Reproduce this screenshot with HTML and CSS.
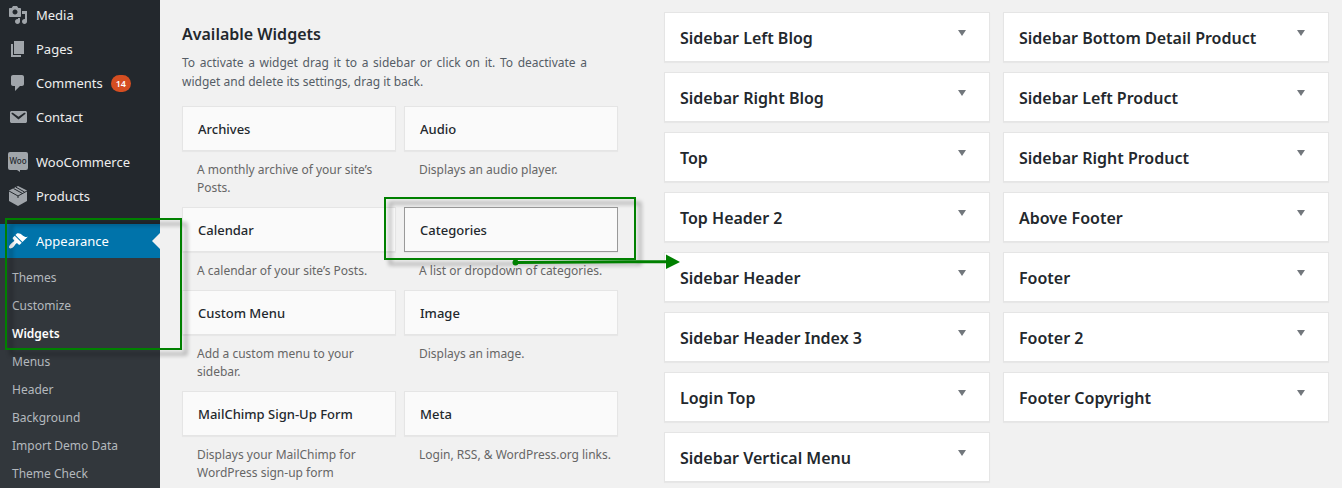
FILE: index.html
```html
<!DOCTYPE html>
<html lang="en">
<head>
<meta charset="utf-8">
<title>Widgets</title>
<link rel="stylesheet" href="styles.css">
</head>
<body>
<div class="page">
  <nav class="menu" aria-label="Main menu">
    <ul class="menu-list">
      <li><a class="menu-link" href="#"><svg class="icon" viewBox="0 0 20 20"><path d="M13 11V4c0-.55-.45-1-1-1h-1.67L9 1H5L3.67 3H2c-.55 0-1 .45-1 1v7c0 .55.45 1 1 1h10c.55 0 1-.45 1-1zM7 4.5c1.38 0 2.5 1.12 2.5 2.5S8.38 9.5 7 9.5 4.5 8.38 4.5 7 5.62 4.5 7 4.5zM14 6h5v10.5c0 1.38-1.12 2.5-2.5 2.5S14 17.88 14 16.5s1.12-2.5 2.5-2.5c.17 0 .34.02.5.05V9h-3V6zm-4 8.05V13h2v3.5c0 1.38-1.12 2.5-2.5 2.5S7 17.88 7 16.5 8.12 14 9.5 14c.17 0 .34.02.5.05z"/></svg>Media</a></li>
      <li><a class="menu-link" href="#"><svg class="icon" viewBox="0 0 20 20"><path d="M6 15V2h10v13H6zm-1 1h8v2H3V5h2v11z"/></svg>Pages</a></li>
      <li><a class="menu-link" href="#"><svg class="icon" viewBox="0 0 20 20"><path d="M5 2h9c1.1 0 2 .9 2 2v7c0 1.1-.9 2-2 2h-2l-5 5v-5H5c-1.1 0-2-.9-2-2V4c0-1.1.9-2 2-2z"/></svg>Comments <span class="badge">14</span></a></li>
      <li><a class="menu-link" href="#"><svg class="icon" viewBox="0 0 20 20"><path d="M3.87 4h13.25C18.37 4 19 4.59 19 5.79v8.42c0 1.19-.63 1.79-1.88 1.79H3.87c-1.25 0-1.88-.6-1.88-1.79V5.79c0-1.2.63-1.79 1.88-1.79zm6.62 8.6l6.74-5.53c.24-.2.43-.66.13-1.07-.29-.41-.82-.42-1.17-.17l-5.7 3.86L4.8 5.83c-.35-.25-.88-.24-1.17.17-.3.41-.11.87.13 1.07z"/></svg>Contact</a></li>
      <li class="group-start"><a class="menu-link" href="#"><svg class="icon" viewBox="0 0 20 20"><path d="M2 0h16q2 0 2 2v14q0 2-2 2h-6v2l-3-2H2q-2 0-2-2V2q0-2 2-2z"/><text class="icon-text" x="10" y="12" text-anchor="middle">Woo</text></svg>WooCommerce</a></li>
      <li><a class="menu-link" href="#"><svg class="icon" viewBox="0 0 20 20"><path d="M10 0l9 4.500v10.500l-9 5-9-5V4.500z"/><path class="icon-line" d="M1 5l9 5 9-5M10 10v2M5.500 2.500l9 5M8 1.200l8.500 4.800"/></svg>Products</a></li>
      <li class="group-start"><a class="menu-link current" href="#" aria-current="true"><svg class="icon" viewBox="0 0 20 20"><path d="M14.480 11.060L7.410 3.990l1.500-1.500c.5-.56 2.300-.47 3.510.32 1.210.8 1.430 1.280 2.910 2.100 1.180.64 2.450 1.260 4.450.85zm-.71.71L6.700 4.700 4.930 6.470c-.39.39-.39 1.020 0 1.410l1.060 1.060c.39.39.39 1.030 0 1.420-.6.6-1.430 1.110-2.210 1.690-.35.26-.7.53-1.010.84C1.430 14.230.4 16.080 1.400 17.070c.99 1 2.840-.03 4.180-1.360.31-.31.58-.66.85-1.020.57-.78 1.080-1.610 1.690-2.210.39-.39 1.020-.39 1.410 0l1.060 1.060c.39.39 1.020.39 1.410 0z"/></svg>Appearance</a></li>
    </ul>
    <ul class="submenu">
      <li><a class="submenu-link" href="#">Themes</a></li>
      <li><a class="submenu-link" href="#">Customize</a></li>
      <li><a class="submenu-link active" href="#" aria-current="page">Widgets</a></li>
      <li><a class="submenu-link" href="#">Menus</a></li>
      <li><a class="submenu-link" href="#">Header</a></li>
      <li><a class="submenu-link" href="#">Background</a></li>
      <li><a class="submenu-link" href="#">Import Demo Data</a></li>
      <li><a class="submenu-link" href="#">Theme Check</a></li>
    </ul>
    <div class="marker menu-marker"></div>
  </nav>
  <main class="content">
    <section class="available">
      <h1 class="title">Available Widgets</h1>
      <p class="intro">To activate a widget drag it to a sidebar or click on it. To deactivate a widget and delete its settings, drag it back.</p>
      <div class="widgets">
        <article><h2 class="widget">Archives</h2><p class="about">A monthly archive of your site’s Posts.</p></article>
        <article><h2 class="widget">Audio</h2><p class="about">Displays an audio player.</p></article>
        <article><h2 class="widget">Calendar</h2><p class="about">A calendar of your site’s Posts.</p></article>
        <article class="marked"><h2 class="widget selected">Categories</h2><p class="about">A list or dropdown of categories.</p>
          <div class="marker widget-marker"></div>
          <svg class="arrow" width="168" height="16" viewBox="0 0 168 16"><circle cx="3.500" cy="8.500" r="3"/><path d="M3 7l151-1v3L3 10zM154 .5L168 8l-14 7z"/></svg>
        </article>
        <article><h2 class="widget">Custom Menu</h2><p class="about">Add a custom menu to your sidebar.</p></article>
        <article><h2 class="widget">Image</h2><p class="about">Displays an image.</p></article>
        <article><h2 class="widget">MailChimp Sign-Up Form</h2><p class="about">Displays your MailChimp for WordPress sign-up form</p></article>
        <article><h2 class="widget">Meta</h2><p class="about">Login, RSS, &amp; WordPress.org links.</p></article>
      </div>
    </section>
    <section class="areas">
      <div class="area-column">
        <div class="area"><h2 class="area-name">Sidebar Left Blog</h2><button class="toggle" aria-label="Open Sidebar Left Blog"></button></div>
        <div class="area"><h2 class="area-name">Sidebar Right Blog</h2><button class="toggle" aria-label="Open Sidebar Right Blog"></button></div>
        <div class="area"><h2 class="area-name">Top</h2><button class="toggle" aria-label="Open Top"></button></div>
        <div class="area"><h2 class="area-name">Top Header 2</h2><button class="toggle" aria-label="Open Top Header 2"></button></div>
        <div class="area"><h2 class="area-name">Sidebar Header</h2><button class="toggle" aria-label="Open Sidebar Header"></button></div>
        <div class="area"><h2 class="area-name">Sidebar Header Index 3</h2><button class="toggle" aria-label="Open Sidebar Header Index 3"></button></div>
        <div class="area"><h2 class="area-name">Login Top</h2><button class="toggle" aria-label="Open Login Top"></button></div>
        <div class="area"><h2 class="area-name">Sidebar Vertical Menu</h2><button class="toggle" aria-label="Open Sidebar Vertical Menu"></button></div>
      </div>
      <div class="area-column">
        <div class="area"><h2 class="area-name">Sidebar Bottom Detail Product</h2><button class="toggle" aria-label="Open Sidebar Bottom Detail Product"></button></div>
        <div class="area"><h2 class="area-name">Sidebar Left Product</h2><button class="toggle" aria-label="Open Sidebar Left Product"></button></div>
        <div class="area"><h2 class="area-name">Sidebar Right Product</h2><button class="toggle" aria-label="Open Sidebar Right Product"></button></div>
        <div class="area"><h2 class="area-name">Above Footer</h2><button class="toggle" aria-label="Open Above Footer"></button></div>
        <div class="area"><h2 class="area-name">Footer</h2><button class="toggle" aria-label="Open Footer"></button></div>
        <div class="area"><h2 class="area-name">Footer 2</h2><button class="toggle" aria-label="Open Footer 2"></button></div>
        <div class="area"><h2 class="area-name">Footer Copyright</h2><button class="toggle" aria-label="Open Footer Copyright"></button></div>
      </div>
    </section>
  </main>
</div>
</body>
</html>
```

FILE: styles.css
```css
* {
  box-sizing: border-box;
}

body,
h1,
h2,
p,
ul {
  margin: 0;
  padding: 0;
}

ul {
  list-style: none;
}

body {
  background: #f1f1f1;
  color: #23282d;
  font-family: "Noto Sans", "Open Sans", sans-serif;
  font-size: 13px;
}

.page {
  display: flex;
  min-height: 100vh;
}

/* Dark admin menu */
.menu {
  position: relative;
  flex: 0 0 160px;
  background: #23282d;
  display: flex;
  flex-direction: column;
}

.menu-list {
  margin-top: -2px;
}

.group-start {
  margin-top: 11px;
}

.menu-link {
  display: flex;
  align-items: center;
  gap: 8px;
  height: 34px;
  padding: 0 8px;
  color: #eee;
  text-decoration: none;
}

.menu-link.current {
  position: relative;
  background: #0073aa;
  color: #fff;
}

.menu-link.current::after {
  content: "";
  position: absolute;
  right: 0;
  top: 9px;
  border: 8px solid transparent;
  border-left: 0;
  border-right-color: #f1f1f1;
}

.icon {
  flex: none;
  width: 20px;
  height: 20px;
  fill: #a0a5aa;
}

.current .icon {
  fill: #fff;
}

.icon-text {
  fill: #23282d;
  font-size: 8px;
  font-weight: 500;
}

.icon-line {
  fill: none;
  stroke: #23282d;
  stroke-width: 1;
}

.badge {
  height: 17px;
  padding: 0 5px;
  border-radius: 9px;
  background: #d54e21;
  color: #fff;
  font-size: 9px;
  font-weight: 600;
  line-height: 17px;
}

.submenu {
  flex: 1;
  padding-top: 6px;
  background: #32373c;
}

.submenu-link {
  display: block;
  padding: 0 12px;
  color: #b4b9be;
  font-size: 12px;
  line-height: 28px;
  text-decoration: none;
}

.submenu-link.active {
  color: #fff;
  font-weight: 600;
}

/* Content */
.content {
  flex: 1;
  display: grid;
  grid-template-columns: 436fr 665fr;
  gap: 46px;
  padding: 12px 13px 0 22px;
}

.title {
  margin-top: 10px;
  font-size: 16px;
  font-weight: 600;
  line-height: 24px;
}

.intro {
  padding: 7px 31px 15px 0;
  color: #555d66;
  font-size: 12px;
  line-height: 19px;
  text-align: justify;
}

.widgets {
  display: grid;
  grid-template-columns: 1fr 1fr;
  column-gap: 8px;
}

.widget {
  height: 45px;
  padding: 0 15px;
  border: 1px solid #e5e5e5;
  background: #fafafa;
  box-shadow: 0 1px 1px rgba(0, 0, 0, 0.04);
  font-size: 13px;
  font-weight: 500;
  line-height: 44px;
}

.widget.selected {
  border-color: #999;
}

.about {
  padding: 10px 0 10px 15px;
  color: #666;
  font-size: 12px;
  line-height: 18px;
}

.widgets > :nth-last-child(-n + 2) .about {
  padding-bottom: 0;
}

.areas {
  display: grid;
  grid-template-columns: 1fr 1fr;
  gap: 13px;
}

.area-column {
  display: flex;
  flex-direction: column;
  gap: 10px;
}

.area {
  display: flex;
  justify-content: space-between;
  height: 50px;
  padding: 0 17px 0 15px;
  border: 1px solid #e5e5e5;
  background: #fff;
  box-shadow: 0 1px 1px rgba(0, 0, 0, 0.04);
}

.area-name {
  font-size: 16px;
  font-weight: 600;
  line-height: 51px;
}

.toggle {
  width: 20px;
  height: 40px;
  padding: 0;
  border: 0;
  background: none;
}

.toggle::before {
  content: "";
  display: block;
  width: 0;
  margin: 0 auto;
  border: 4px solid transparent;
  border-top: 6px solid #72777c;
  border-bottom: 0;
}

/* Green annotations */
.marker {
  position: absolute;
  z-index: 1;
  border: 2px solid #008000;
  filter: drop-shadow(5px 5px 2px rgba(0, 0, 0, 0.4));
  pointer-events: none;
}

.menu-marker {
  left: 5px;
  right: -22px;
  top: 218px;
  height: 132px;
}

.marked {
  position: relative;
}

.widget-marker {
  left: -20px;
  right: -18px;
  top: -10px;
  height: 63px;
}

.arrow {
  position: absolute;
  z-index: 2;
  left: 108px;
  top: 47px;
  fill: #008000;
}
```
